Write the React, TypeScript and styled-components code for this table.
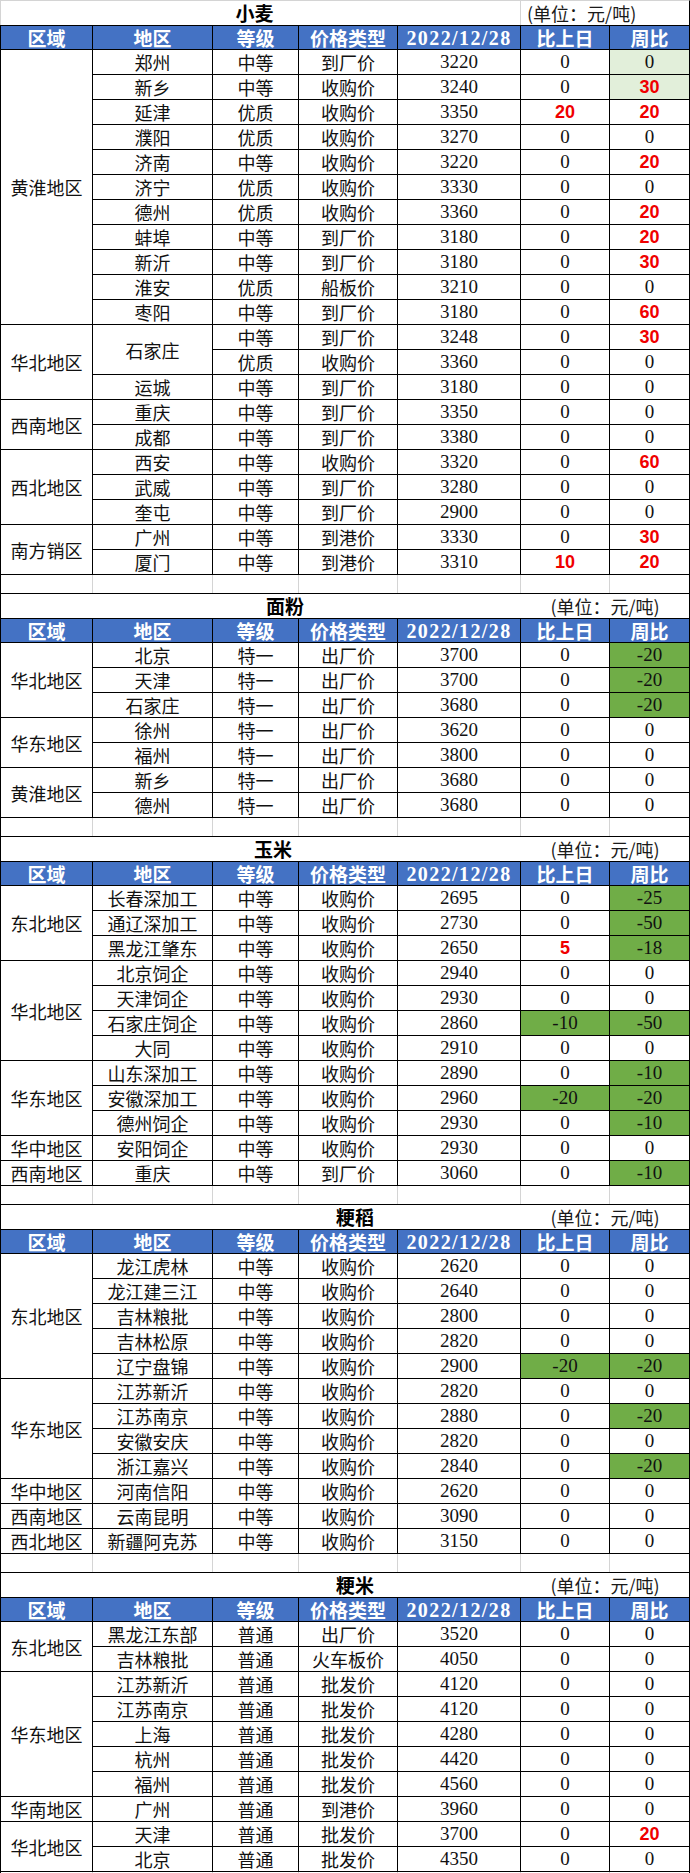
import React from "react";
import styled, { createGlobalStyle, css } from "styled-components";

const GlobalStyle = createGlobalStyle`
  html, body {
    margin: 0;
    padding: 0;
    background: #fff;
  }
  body {
    font-family: "Noto Sans CJK SC", "Noto Sans", sans-serif;
    color: #000;
  }
`;

const COLUMNS = "93px 120px 86px 99px 123px 89px 80px";
const LINE = "#000";
const GRID = "#d4d4d4";
const HEAD_BG = "#4472c4";

// "30r" = red bold, "-20g" = green fill, "0l" = light green fill
type Row = [string | null, string, string, string, string, string];
type Group = { region: string; rows: Row[] };
type Section = {
  title: string;
  shift: number;
  unitAlign: "left" | "center";
  first?: boolean;
  groups: Group[];
};

const sections: Section[] = [
  {
    title: "小麦",
    shift: -6,
    unitAlign: "left",
    first: true,
    groups: [
      {
        region: "黄淮地区",
        rows: [
          ["郑州", "中等", "到厂价", "3220", "0", "0l"],
          ["新乡", "中等", "收购价", "3240", "0", "30rl"],
          ["延津", "优质", "收购价", "3350", "20r", "20r"],
          ["濮阳", "优质", "收购价", "3270", "0", "0"],
          ["济南", "中等", "收购价", "3220", "0", "20r"],
          ["济宁", "优质", "收购价", "3330", "0", "0"],
          ["德州", "优质", "收购价", "3360", "0", "20r"],
          ["蚌埠", "中等", "到厂价", "3180", "0", "20r"],
          ["新沂", "中等", "到厂价", "3180", "0", "30r"],
          ["淮安", "优质", "船板价", "3210", "0", "0"],
          ["枣阳", "中等", "到厂价", "3180", "0", "60r"],
        ],
      },
      {
        region: "华北地区",
        rows: [
          ["石家庄|2", "中等", "到厂价", "3248", "0", "30r"],
          [null, "优质", "收购价", "3360", "0", "0"],
          ["运城", "中等", "到厂价", "3180", "0", "0"],
        ],
      },
      {
        region: "西南地区",
        rows: [
          ["重庆", "中等", "到厂价", "3350", "0", "0"],
          ["成都", "中等", "到厂价", "3380", "0", "0"],
        ],
      },
      {
        region: "西北地区",
        rows: [
          ["西安", "中等", "收购价", "3320", "0", "60r"],
          ["武威", "中等", "到厂价", "3280", "0", "0"],
          ["奎屯", "中等", "到厂价", "2900", "0", "0"],
        ],
      },
      {
        region: "南方销区",
        rows: [
          ["广州", "中等", "到港价", "3330", "0", "30r"],
          ["厦门", "中等", "到港价", "3310", "10r", "20r"],
        ],
      },
    ],
  },
  {
    title: "面粉",
    shift: 24,
    unitAlign: "center",
    groups: [
      {
        region: "华北地区",
        rows: [
          ["北京", "特一", "出厂价", "3700", "0", "-20g"],
          ["天津", "特一", "出厂价", "3700", "0", "-20g"],
          ["石家庄", "特一", "出厂价", "3680", "0", "-20g"],
        ],
      },
      {
        region: "华东地区",
        rows: [
          ["徐州", "特一", "出厂价", "3620", "0", "0"],
          ["福州", "特一", "出厂价", "3800", "0", "0"],
        ],
      },
      {
        region: "黄淮地区",
        rows: [
          ["新乡", "特一", "出厂价", "3680", "0", "0"],
          ["德州", "特一", "出厂价", "3680", "0", "0"],
        ],
      },
    ],
  },
  {
    title: "玉米",
    shift: 12,
    unitAlign: "center",
    groups: [
      {
        region: "东北地区",
        rows: [
          ["长春深加工", "中等", "收购价", "2695", "0", "-25g"],
          ["通辽深加工", "中等", "收购价", "2730", "0", "-50g"],
          ["黑龙江肇东", "中等", "收购价", "2650", "5r", "-18g"],
        ],
      },
      {
        region: "华北地区",
        rows: [
          ["北京饲企", "中等", "收购价", "2940", "0", "0"],
          ["天津饲企", "中等", "收购价", "2930", "0", "0"],
          ["石家庄饲企", "中等", "收购价", "2860", "-10g", "-50g"],
          ["大同", "中等", "收购价", "2910", "0", "0"],
        ],
      },
      {
        region: "华东地区",
        rows: [
          ["山东深加工", "中等", "收购价", "2890", "0", "-10g"],
          ["安徽深加工", "中等", "收购价", "2960", "-20g", "-20g"],
          ["德州饲企", "中等", "收购价", "2930", "0", "-10g"],
        ],
      },
      {
        region: "华中地区",
        rows: [["安阳饲企", "中等", "收购价", "2930", "0", "0"]],
      },
      {
        region: "西南地区",
        rows: [["重庆", "中等", "到厂价", "3060", "0", "-10g"]],
      },
    ],
  },
  {
    title: "粳稻",
    shift: 94,
    unitAlign: "center",
    groups: [
      {
        region: "东北地区",
        rows: [
          ["龙江虎林", "中等", "收购价", "2620", "0", "0"],
          ["龙江建三江", "中等", "收购价", "2640", "0", "0"],
          ["吉林粮批", "中等", "收购价", "2800", "0", "0"],
          ["吉林松原", "中等", "收购价", "2820", "0", "0"],
          ["辽宁盘锦", "中等", "收购价", "2900", "-20g", "-20g"],
        ],
      },
      {
        region: "华东地区",
        rows: [
          ["江苏新沂", "中等", "收购价", "2820", "0", "0"],
          ["江苏南京", "中等", "收购价", "2880", "0", "-20g"],
          ["安徽安庆", "中等", "收购价", "2820", "0", "0"],
          ["浙江嘉兴", "中等", "收购价", "2840", "0", "-20g"],
        ],
      },
      {
        region: "华中地区",
        rows: [["河南信阳", "中等", "收购价", "2620", "0", "0"]],
      },
      {
        region: "西南地区",
        rows: [["云南昆明", "中等", "收购价", "3090", "0", "0"]],
      },
      {
        region: "西北地区",
        rows: [["新疆阿克苏", "中等", "收购价", "3150", "0", "0"]],
      },
    ],
  },
  {
    title: "粳米",
    shift: 94,
    unitAlign: "center",
    groups: [
      {
        region: "东北地区",
        rows: [
          ["黑龙江东部", "普通", "出厂价", "3520", "0", "0"],
          ["吉林粮批", "普通", "火车板价", "4050", "0", "0"],
        ],
      },
      {
        region: "华东地区",
        rows: [
          ["江苏新沂", "普通", "批发价", "4120", "0", "0"],
          ["江苏南京", "普通", "批发价", "4120", "0", "0"],
          ["上海", "普通", "批发价", "4280", "0", "0"],
          ["杭州", "普通", "批发价", "4420", "0", "0"],
          ["福州", "普通", "批发价", "4560", "0", "0"],
        ],
      },
      {
        region: "华南地区",
        rows: [["广州", "普通", "到港价", "3960", "0", "0"]],
      },
      {
        region: "华北地区",
        rows: [
          ["天津", "普通", "批发价", "3700", "0", "20r"],
          ["北京", "普通", "批发价", "4350", "0", "0"],
        ],
      },
    ],
  },
];

const headers = ["区域", "地区", "等级", "价格类型", "2022/12/28", "比上日", "周比"];

const Page = styled.div`
  width: 690px;
`;

const Sheet = styled.div`
  display: grid;
  grid-template-columns: ${COLUMNS};
  grid-auto-rows: 25px;
  width: 690px;
`;

const BlankRow = styled.div`
  display: grid;
  grid-template-columns: ${COLUMNS};
  height: 18px;
  width: 690px;
`;

const BlankCell = styled.div<{ $edge?: "left" | "right" }>`
  box-sizing: border-box;
  border-right: 1px solid ${(p) => (p.$edge === "right" ? LINE : GRID)};
  border-left: ${(p) => (p.$edge === "left" ? `1px solid ${LINE}` : "none")};
`;

const cellBase = css`
  box-sizing: border-box;
  display: flex;
  align-items: center;
  justify-content: center;
  white-space: nowrap;
  overflow: hidden;
  line-height: 24px;
`;

const TitleCell = styled.div<{ $shift: number; $first?: boolean }>`
  ${cellBase};
  grid-column: 1 / 6;
  padding-left: ${(p) => Math.max(0, p.$shift * 2)}px;
  padding-right: ${(p) => Math.max(0, -p.$shift * 2)}px;
  border-top: 1px solid ${(p) => (p.$first ? GRID : LINE)};
  border-left: 1px solid ${(p) => (p.$first ? GRID : LINE)};
  border-right: ${(p) => (p.$first ? `1px solid ${GRID}` : "none")};
  font-size: 19px;
  font-weight: 700;
`;

const UnitCell = styled.div<{ $align: "left" | "center"; $first?: boolean }>`
  ${cellBase};
  grid-column: 6 / 8;
  justify-content: ${(p) => (p.$align === "left" ? "flex-start" : "center")};
  padding-left: ${(p) => (p.$align === "left" ? "6px" : "0")};
  border-top: 1px solid ${(p) => (p.$first ? GRID : LINE)};
  border-right: 1px solid ${LINE};
  font-size: 18px;
  color: #1a1a1a;
`;

const HeadCell = styled.div<{ $date?: boolean; $first?: boolean }>`
  ${cellBase};
  background: ${HEAD_BG};
  color: #fff;
  font-weight: 700;
  border-top: 1px solid ${LINE};
  border-right: 1px solid ${LINE};
  border-bottom: 1px solid ${LINE};
  border-left: ${(p) => (p.$first ? `1px solid ${LINE}` : "none")};
  font-size: ${(p) => (p.$date ? "20px" : "19px")};
  font-family: ${(p) =>
    p.$date ? `"Liberation Serif", serif` : `"Noto Sans CJK SC", sans-serif`};
  letter-spacing: ${(p) => (p.$date ? "1.4px" : "0")};
`;

const RegionCell = styled.div<{ $span: number }>`
  ${cellBase};
  grid-row: span ${(p) => p.$span};
  border-left: 1px solid ${LINE};
  border-right: 1px solid ${LINE};
  border-bottom: 1px solid ${LINE};
  font-size: 18px;
  color: #111;
`;

const TextCell = styled.div<{ $span?: number }>`
  ${cellBase};
  grid-row: span ${(p) => p.$span ?? 1};
  border-right: 1px solid ${LINE};
  border-bottom: 1px solid ${LINE};
  font-size: 18px;
  color: #111;
`;

type Tone = { red: boolean; fill: "none" | "green" | "light" };

const NumCell = styled.div<{ $red: boolean; $fill: Tone["fill"] }>`
  ${cellBase};
  border-right: 1px solid ${LINE};
  border-bottom: 1px solid ${LINE};
  background: ${(p) =>
    p.$fill === "green" ? "#70ad47" : p.$fill === "light" ? "#e2efda" : "#fff"};
  color: ${(p) => (p.$red ? "#f00000" : "#111")};
  font-family: ${(p) =>
    p.$red ? `"Liberation Sans", sans-serif` : `"Liberation Serif", serif`};
  font-weight: ${(p) => (p.$red ? 700 : 400)};
  font-size: ${(p) => (p.$red ? "18px" : "19px")};
`;

function parseValue(raw: string): { text: string } & Tone {
  const m = raw.match(/^(-?\d+)([rgl]*)$/);
  const text = m ? m[1] : raw;
  const flags = m ? m[2] : "";
  return {
    text,
    red: flags.includes("r"),
    fill: flags.includes("g") ? "green" : flags.includes("l") ? "light" : "none",
  };
}

function Value({ raw }: { raw: string }) {
  const v = parseValue(raw);
  return (
    <NumCell $red={v.red} $fill={v.fill}>
      {v.text}
    </NumCell>
  );
}

function SectionTable({ section }: { section: Section }) {
  return (
    <>
      <Sheet>
        <TitleCell $shift={section.shift} $first={section.first}>
          {section.title}
        </TitleCell>
        <UnitCell $align={section.unitAlign} $first={section.first}>
          (单位：元/吨)
        </UnitCell>
        {headers.map((h, i) => (
          <HeadCell key={h} $first={i === 0} $date={i === 4}>
            {h}
          </HeadCell>
        ))}
        {section.groups.map((g) => (
          <React.Fragment key={g.region}>
            <RegionCell $span={g.rows.length}>{g.region}</RegionCell>
            {g.rows.map((row, ri) => {
              const [city, grade, type, price, day, week] = row;
              let cityCell = null;
              if (city !== null) {
                const [name, span] = city.split("|");
                cityCell = <TextCell $span={span ? Number(span) : 1}>{name}</TextCell>;
              }
              return (
                <React.Fragment key={ri}>
                  {cityCell}
                  <TextCell>{grade}</TextCell>
                  <TextCell>{type}</TextCell>
                  <NumCell $red={false} $fill="none">
                    {price}
                  </NumCell>
                  <Value raw={day} />
                  <Value raw={week} />
                </React.Fragment>
              );
            })}
          </React.Fragment>
        ))}
      </Sheet>
      <BlankRow>
        {headers.map((h, i) => (
          <BlankCell
            key={h}
            $edge={i === 0 ? "left" : i === headers.length - 1 ? "right" : undefined}
          />
        ))}
      </BlankRow>
    </>
  );
}

export default function App() {
  return (
    <>
      <GlobalStyle />
      <Page>
        {sections.map((s) => (
          <SectionTable key={s.title} section={s} />
        ))}
      </Page>
    </>
  );
}
